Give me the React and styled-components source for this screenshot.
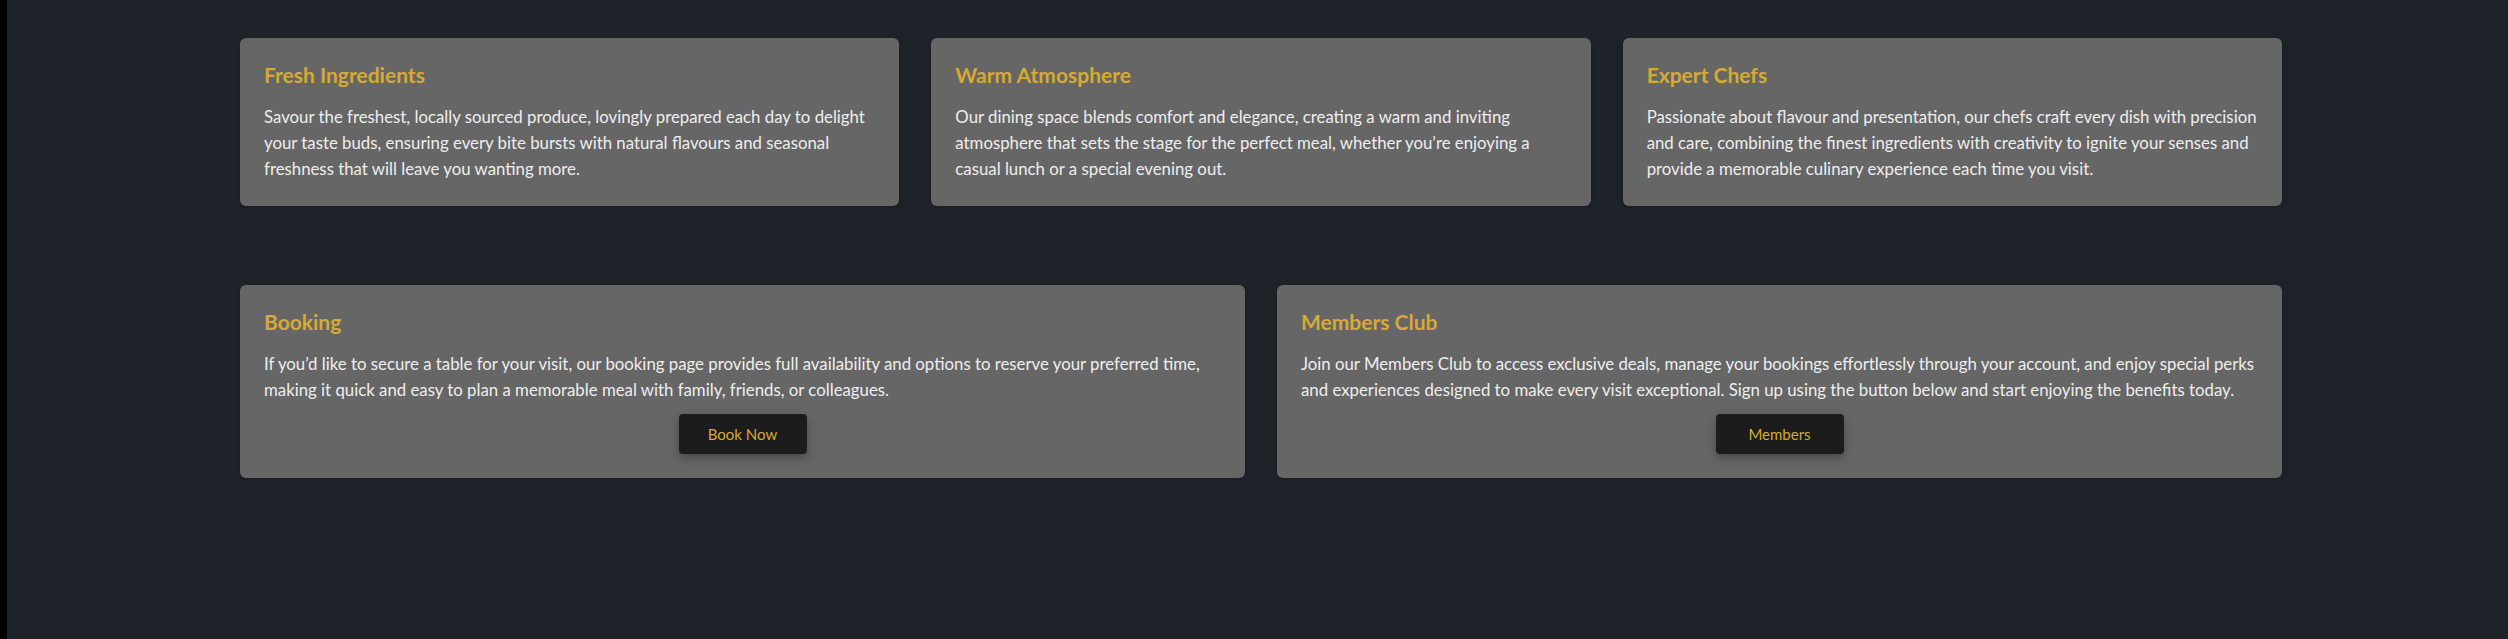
import styled, { createGlobalStyle } from 'styled-components';

const GlobalStyle = createGlobalStyle`
  html, body {
    margin: 0;
    padding: 0;
    background: #1e2229;
  }
  body {
    font-family: Lato, "Open Sans", sans-serif;
  }
`

const features = [
  {
    title: 'Fresh Ingredients',
    text: 'Savour the freshest, locally sourced produce, lovingly prepared each day to delight your taste buds, ensuring every bite bursts with natural flavours and seasonal freshness that will leave you wanting more.',
  },
  {
    title: 'Warm Atmosphere',
    text: 'Our dining space blends comfort and elegance, creating a warm and inviting atmosphere that sets the stage for the perfect meal, whether you\u2019re enjoying a casual lunch or a special evening out.',
  },
  {
    title: 'Expert Chefs',
    text: 'Passionate about flavour and presentation, our chefs craft every dish with precision and care, combining the finest ingredients with creativity to ignite your senses and provide a memorable culinary experience each time you visit.',
  },
]

const actions = [
  {
    title: 'Booking',
    text: 'If you\u2019d like to secure a table for your visit, our booking page provides full availability and options to reserve your preferred time, making it quick and easy to plan a memorable meal with family, friends, or colleagues.',
    button: 'Book Now',
  },
  {
    title: 'Members Club',
    text: 'Join our Members Club to access exclusive deals, manage your bookings effortlessly through your account, and enjoy special perks and experiences designed to make every visit exceptional. Sign up using the button below and start enjoying the benefits today.',
    button: 'Members',
  },
]

function App() {
  return (
    <>
      <GlobalStyle />
      <Page>
        <Rail />
        <Main>
          <Grid cols={3}>
            {features.map(f => (
              <Card key={f.title}>
                <Title>{f.title}</Title>
                <Text>{f.text}</Text>
              </Card>
            ))}
          </Grid>

          <Grid cols={2} spaced>
            {actions.map(a => (
              <Card key={a.title}>
                <Title>{a.title}</Title>
                <Text>{a.text}</Text>
                <ButtonRow>
                  <Button>{a.button}</Button>
                </ButtonRow>
              </Card>
            ))}
          </Grid>
        </Main>
      </Page>
    </>
  )
}

export default App

const Page = styled.div`
  display: flex;
  min-height: 100vh;
  background: #1e2229;
`

const Rail = styled.div`
  width: 7px;
  flex-shrink: 0;
  background: #000;
`

const Main = styled.main`
  flex: 1;
  padding: 38px 0 0 233px;
`

const Grid = styled.section`
  display: grid;
  grid-template-columns: repeat(${p => p.cols}, 1fr);
  gap: 32px;
  width: 2042px;
  margin-top: ${p => (p.spaced ? '79px' : '0')};
`

const Card = styled.div`
  background: #666666;
  border-radius: 6px;
  padding: 24px;
  box-shadow: 0 2px 6px rgba(0, 0, 0, 0.15);
`

const Title = styled.h3`
  margin: 0 0 16px;
  font-size: 21px;
  line-height: 26px;
  font-weight: 700;
  color: #d6aa33;
`

const Text = styled.p`
  margin: 0;
  font-size: 16.8px;
  line-height: 26px;
  color: #eeeeee;
`

const ButtonRow = styled.div`
  display: flex;
  justify-content: center;
  margin-top: 11px;
`

const Button = styled.button`
  width: 128px;
  height: 40px;
  border: none;
  border-radius: 4px;
  background: #1c1c1c;
  color: #d6aa33;
  font-family: inherit;
  font-size: 15px;
  cursor: pointer;
  box-shadow: 0 4px 10px rgba(0, 0, 0, 0.3);
`
